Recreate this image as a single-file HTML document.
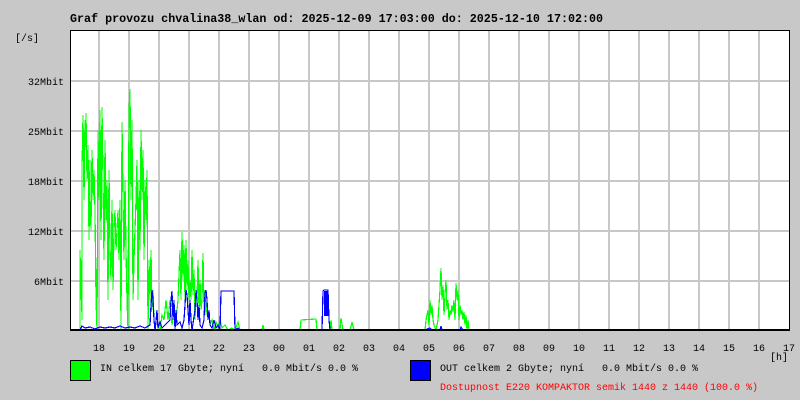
<!DOCTYPE html>
<html><head><meta charset="utf-8"><style>
html,body{margin:0;padding:0;background:#c8c8c8;width:800px;height:400px;overflow:hidden}
svg{display:block}
text{font-family:"Liberation Mono",monospace;}
</style></head><body>
<svg width="800" height="400" xmlns="http://www.w3.org/2000/svg">
<rect width="800" height="400" fill="#c8c8c8"/>
<rect x="70" y="30" width="720" height="300" fill="#fff"/>
<g stroke="#c8c8c8" stroke-width="2">
<line x1="99" y1="31" x2="99" y2="330"/><line x1="129" y1="31" x2="129" y2="330"/><line x1="159" y1="31" x2="159" y2="330"/><line x1="189" y1="31" x2="189" y2="330"/><line x1="219" y1="31" x2="219" y2="330"/><line x1="249" y1="31" x2="249" y2="330"/><line x1="279" y1="31" x2="279" y2="330"/><line x1="309" y1="31" x2="309" y2="330"/><line x1="339" y1="31" x2="339" y2="330"/><line x1="369" y1="31" x2="369" y2="330"/><line x1="399" y1="31" x2="399" y2="330"/><line x1="429" y1="31" x2="429" y2="330"/><line x1="459" y1="31" x2="459" y2="330"/><line x1="489" y1="31" x2="489" y2="330"/><line x1="519" y1="31" x2="519" y2="330"/><line x1="549" y1="31" x2="549" y2="330"/><line x1="579" y1="31" x2="579" y2="330"/><line x1="609" y1="31" x2="609" y2="330"/><line x1="639" y1="31" x2="639" y2="330"/><line x1="669" y1="31" x2="669" y2="330"/><line x1="699" y1="31" x2="699" y2="330"/><line x1="729" y1="31" x2="729" y2="330"/><line x1="759" y1="31" x2="759" y2="330"/>
<line x1="71" y1="81" x2="790" y2="81"/><line x1="71" y1="131" x2="790" y2="131"/><line x1="71" y1="181" x2="790" y2="181"/><line x1="71" y1="231" x2="790" y2="231"/><line x1="71" y1="281" x2="790" y2="281"/>
</g>
<g fill="none" stroke="#00ff00" stroke-width="1.2" shape-rendering="crispEdges">
<polyline points="80,330 80,250 81,300 81,260 82,320 82,170 83,115 84,200 85,120 86,150 86,113 87,180 88,145 89,240 90,160 90,200 91,230 92,150 93,200 94,170 95,210 96,300 97,330 98,130 99,200 100,110 101,240 102,107 103,180 104,260 105,140 106,220 107,180 108,300 109,170 110,250 111,280 112,200 113,290 114,230 115,210 116,250 117,230 118,210 119,260 120,200 121,330 122,122 123,200 124,260 125,180 126,250 127,300 128,330 129,110 130,89 131,200 132,120 133,300 134,260 135,230 136,200 137,160 138,300 139,180 140,250 141,130 142,200 143,150 144,260 145,180 146,220 147,170 148,330 149,260 150,300 151,250 152,310 153,290 154,320 155,330 156,320 157,310 158,330"/>
<polyline points="160,330 162,315 164,320 166,300 168,320 170,300 172,325 174,310 176,320 178,300 180,250 181,300 182,232 183,280 184,245 185,300 186,240 187,290 188,260 189,300 190,280 191,300 192,250 193,295 194,270 195,320 196,290 197,300 198,260 199,310 200,280 201,310 202,300 203,253 204,310 205,290 206,315 207,300 208,320 209,310 210,325 212,320 214,330 216,322 218,328 220,320 222,328 225,325 228,330 232,328 235,330 238,322 240,330 250,330 262,330 263,325 264,330 300,330 301,320 316,319 317,330 330,330 331,320 332,330 340,330 341,318 343,330 350,330 352,322 354,330"/>
<polyline points="425,330 426,320 428,310 429,325 430,300 431,315 432,305 433,320 434,325 436,330 438,320 440,290 441,268 442,300 443,285 444,315 445,295 446,280 447,310 448,300 449,320 450,310 451,315 452,305 453,312 454,300 455,320 456,283 457,300 458,290 459,320 460,305 461,315 462,310 463,320 464,312 465,325 466,315 467,330 468,320 469,330"/>
</g>
<g fill="none" stroke="#0000ff" stroke-width="1.2" shape-rendering="crispEdges">
<polyline points="80,330 82,326 85,328 90,327 95,329 100,327 105,328 110,327 115,328 120,326 125,328 130,327 135,328 140,326 145,328 150,325 151,305 152,290 153,300 154,320 155,330 156,322 157,310 158,328 160,322 162,328 165,325 170,320 171,300 172,291 173,320 174,300 175,330 176,310 177,325 180,322 182,328 184,320 185,305 186,290 187,295 188,310 189,325 190,300 191,320 192,330 195,310 196,290 197,300 198,320 199,305 200,325 202,328 204,320 205,293 206,290 207,300 208,320 209,310 210,325 212,328 214,320 216,328 218,325 220,330 221,291 234,291 235,330 238,328 240,330"/>
<polyline points="322,330 323,291 324,290 328,290 329,320 330,330"/>
<rect x="324" y="291" width="4" height="25" fill="#0000ff" stroke="none"/>
<polyline points="425,330 430,328 432,330 440,330 441,326 442,330 460,330 461,327 463,330"/>
</g>
<g fill="none" stroke="#000" stroke-width="1">
<line x1="70.5" y1="30" x2="70.5" y2="331"/>
<line x1="70" y1="30.5" x2="790" y2="30.5"/>
<line x1="789.5" y1="30" x2="789.5" y2="331"/>
</g>
<line x1="70" y1="330" x2="790" y2="330" stroke="#000" stroke-width="2"/>
<text x="70" y="22" font-size="11.7" font-weight="bold" fill="#000">Graf provozu chvalina38_wlan od: 2025-12-09 17:03:00 do: 2025-12-10 17:02:00</text>
<g font-size="10" fill="#000">
<text x="15" y="41">[/s]</text>
<text x="64" y="85" text-anchor="end">32Mbit</text>
<text x="64" y="135" text-anchor="end">25Mbit</text>
<text x="64" y="185" text-anchor="end">18Mbit</text>
<text x="64" y="235" text-anchor="end">12Mbit</text>
<text x="64" y="285" text-anchor="end">6Mbit</text>
<g text-anchor="middle">
<text x="99" y="351">18</text><text x="129" y="351">19</text><text x="159" y="351">20</text><text x="189" y="351">21</text><text x="219" y="351">22</text><text x="249" y="351">23</text><text x="279" y="351">00</text><text x="309" y="351">01</text><text x="339" y="351">02</text><text x="369" y="351">03</text><text x="399" y="351">04</text><text x="429" y="351">05</text><text x="459" y="351">06</text><text x="489" y="351">07</text><text x="519" y="351">08</text><text x="549" y="351">09</text><text x="579" y="351">10</text><text x="609" y="351">11</text><text x="639" y="351">12</text><text x="669" y="351">13</text><text x="699" y="351">14</text><text x="729" y="351">15</text><text x="759" y="351">16</text><text x="789" y="351">17</text>
</g>
<text x="770" y="360">[h]</text>
<text x="100" y="371" xml:space="preserve">IN celkem 17 Gbyte; nyní   0.0 Mbit/s 0.0 %</text>
<text x="440" y="371" xml:space="preserve">OUT celkem 2 Gbyte; nyní   0.0 Mbit/s 0.0 %</text>
<text x="440" y="390" fill="#ff0000">Dostupnost E220 KOMPAKTOR semik 1440 z 1440 (100.0 %)</text>
</g>
<rect x="70.5" y="360.5" width="20" height="20" fill="#00ff00" stroke="#000"/>
<rect x="410.5" y="360.5" width="20" height="20" fill="#0000ff" stroke="#000"/>
</svg>
</body></html>
